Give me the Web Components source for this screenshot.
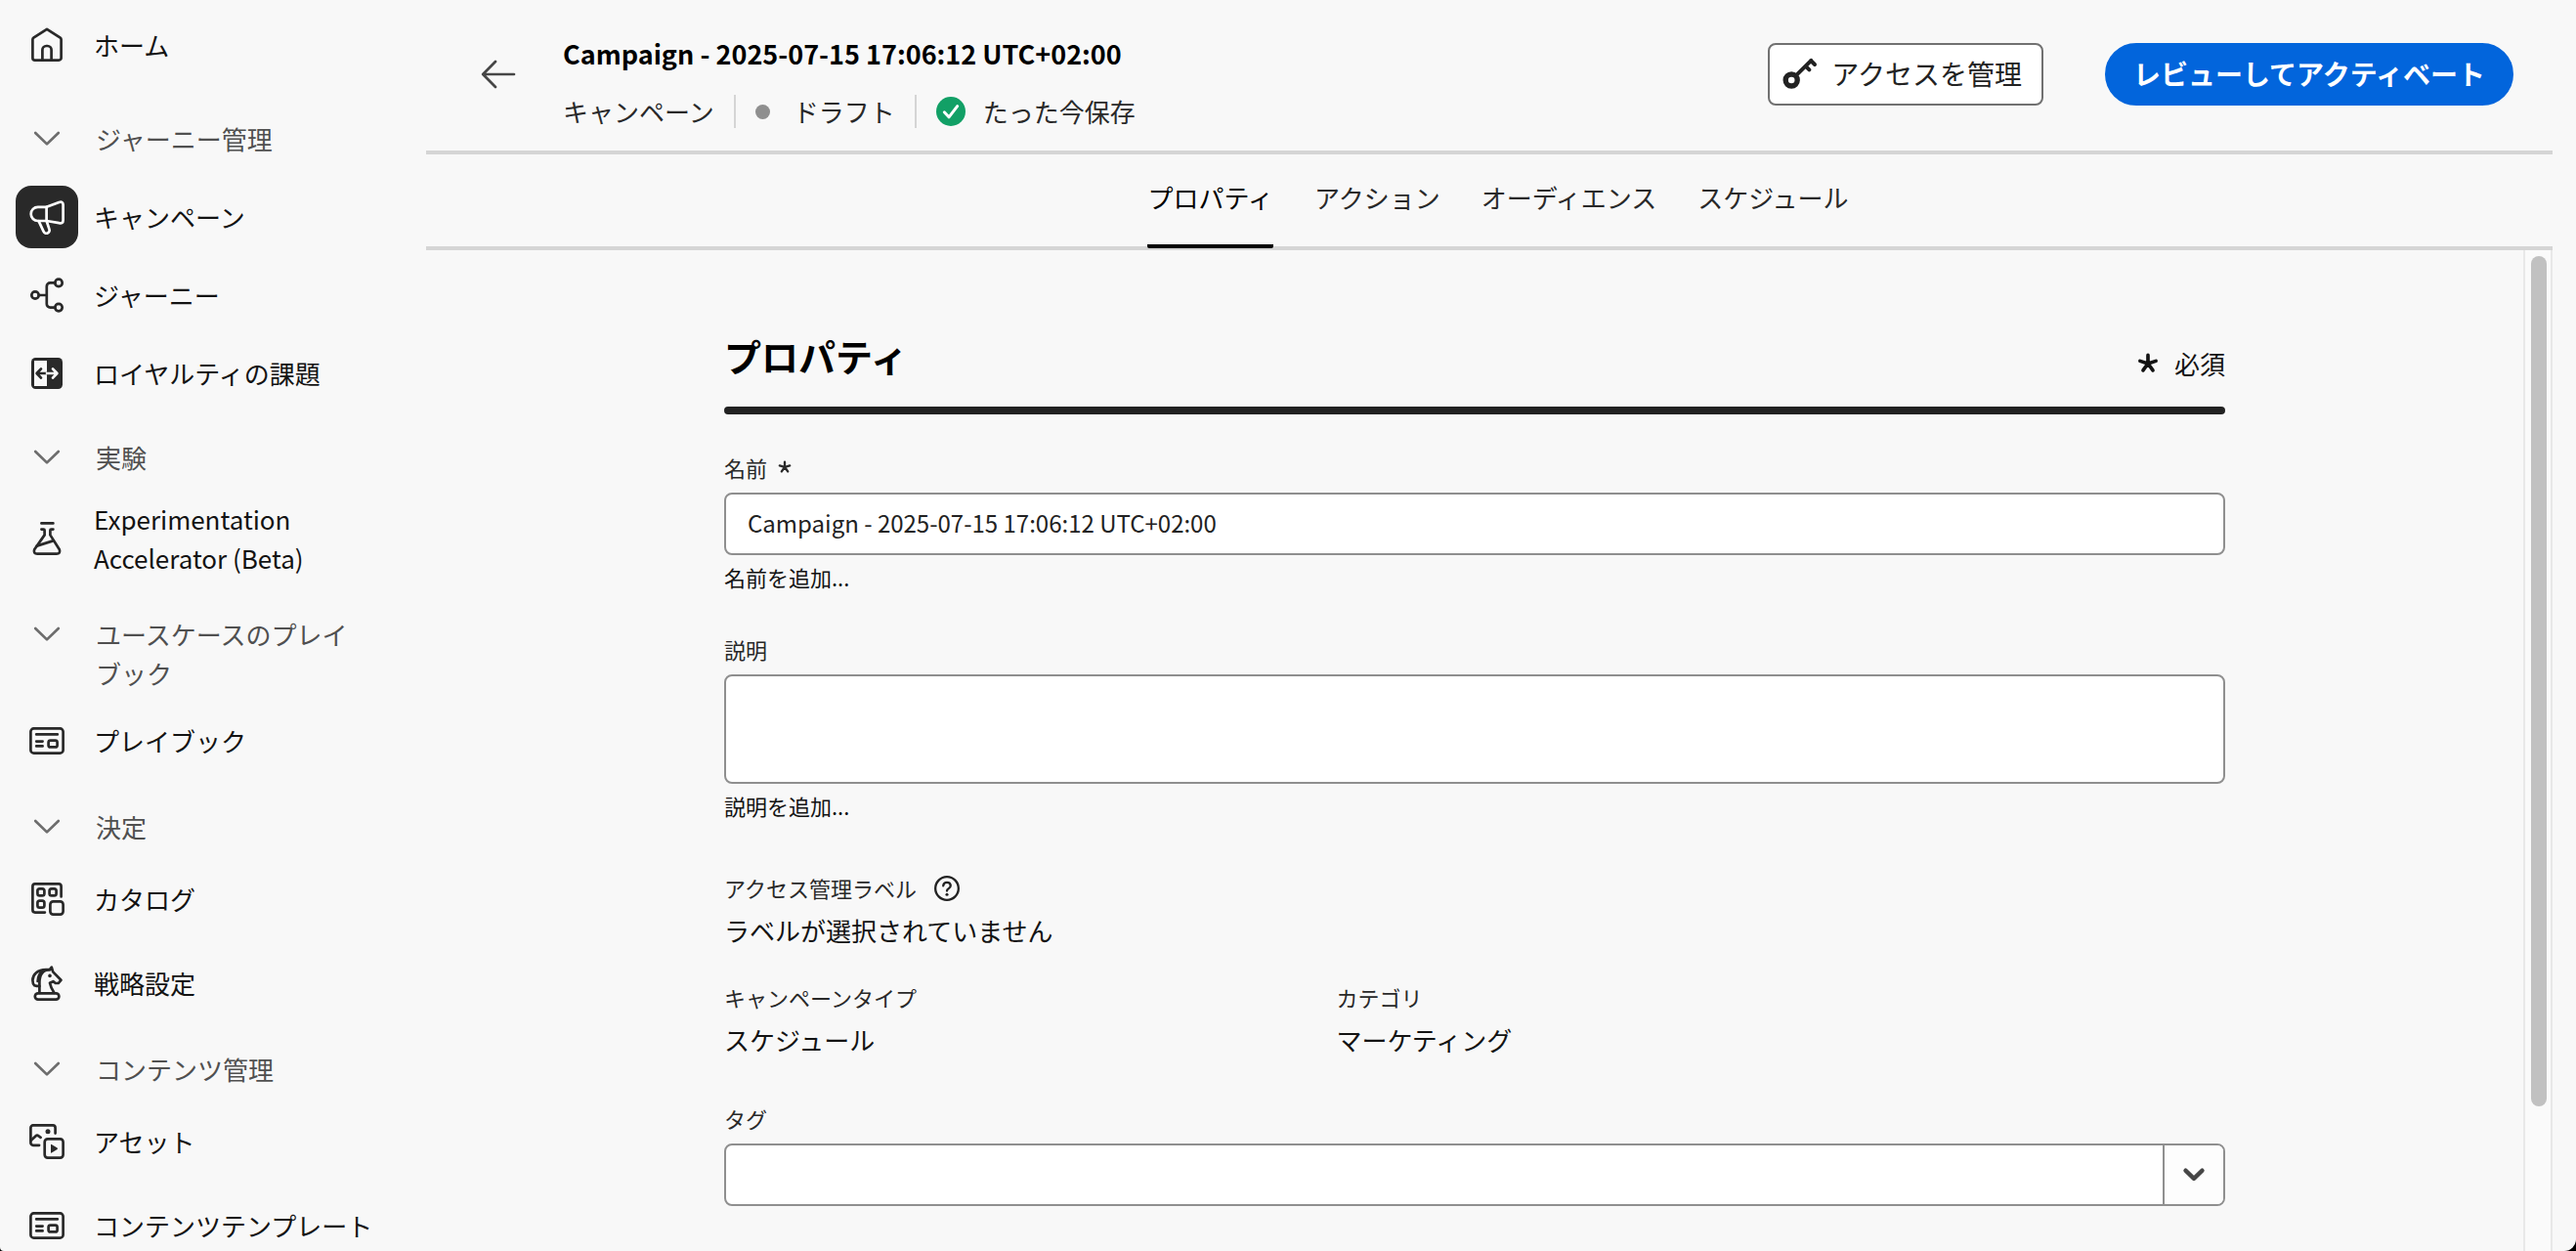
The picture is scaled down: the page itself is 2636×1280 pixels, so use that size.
<!DOCTYPE html>
<html lang="ja">
<head>
  <meta charset="UTF-8">
  <meta name="viewport" content="width=device-width, initial-scale=1.0">
  <title>Campaign</title>
  <style>
    html {
      background: #000;
    }

    body {
      margin: 0;
      font-family: "Noto Sans CJK JP", sans-serif;
      font-size: 26px;
      line-height: 40px;
      color: #131313;
    }
  </style>
</head>
<body>
  <uc-app>
    <uc-nav slot="nav">
      <uc-nav-item icon="home">ホーム</uc-nav-item>
      <uc-nav-heading space="lg">ジャーニー管理</uc-nav-heading>
      <uc-nav-item icon="campaign" space="xs" selected>キャンペーン</uc-nav-item>
      <uc-nav-item icon="journey" space="xs">ジャーニー</uc-nav-item>
      <uc-nav-item icon="loyalty" space="xs">ロイヤルティの課題</uc-nav-item>
      <uc-nav-heading space="sm">実験</uc-nav-heading>
      <uc-nav-item icon="flask" space="xs">Experimentation<br>Accelerator (Beta)</uc-nav-item>
      <uc-nav-heading space="xl">ユースケースのプレイブック</uc-nav-heading>
      <uc-nav-item icon="template" space="sm">プレイブック</uc-nav-item>
      <uc-nav-heading space="md">決定</uc-nav-heading>
      <uc-nav-item icon="catalog">カタログ</uc-nav-item>
      <uc-nav-item icon="strategy" space="sm">戦略設定</uc-nav-item>
      <uc-nav-heading space="md">コンテンツ管理</uc-nav-heading>
      <uc-nav-item icon="assets">アセット</uc-nav-item>
      <uc-nav-item icon="template" space="sm">コンテンツテンプレート</uc-nav-item>
    </uc-nav>

    <uc-header slot="header">
      <span slot="title">Campaign - 2025-07-15 17:06:12 UTC+02:00</span>
      <span slot="type">キャンペーン</span>
      <span slot="status">ドラフト</span>
      <span slot="saved">たった今保存</span>
      <uc-button slot="actions" icon="key">アクセスを管理</uc-button>
      <uc-button slot="actions" variant="accent">レビューしてアクティベート</uc-button>
    </uc-header>

    <uc-tabs slot="tabs">
      <uc-tab selected>プロパティ</uc-tab>
      <uc-tab>アクション</uc-tab>
      <uc-tab>オーディエンス</uc-tab>
      <uc-tab>スケジュール</uc-tab>
    </uc-tabs>

    <uc-panel>
      <span slot="title">プロパティ</span>
      <span slot="note">必須</span>
      <uc-field label="名前" type="text" value="Campaign - 2025-07-15 17:06:12 UTC+02:00" help="名前を追加..." required></uc-field>
      <uc-field label="説明" type="area" help="説明を追加..."></uc-field>
      <uc-summary>
        <uc-value label="アクセス管理ラベル" hint>ラベルが選択されていません</uc-value>
        <uc-value label="キャンペーンタイプ">スケジュール</uc-value>
        <uc-value label="カテゴリ">マーケティング</uc-value>
      </uc-summary>
      <uc-field label="タグ" type="select"></uc-field>
    </uc-panel>
  </uc-app>

  <script>
    const ICONS = {
      home: `
        <path d="M18 1.8 4.3 10.7q-.9.6-.9 1.7v18.8a2.4 2.4 0 0 0 2.4 2.4h24.4a2.4 2.4 0 0 0 2.4-2.4V12.4q0-1.1-.9-1.7z"/>
        <path d="M13.4 33.6V23a4 4 0 0 1 4-4h1.2a4 4 0 0 1 4 4v10.6"/>`,
      chevron: `<path d="M6.2 12 18 23.4 29.8 12"/>`,
      campaign: `
        <path d="M17.6 7.8H8.8a7.1 7.1 0 0 0 0 14.2h8.8z"/>
        <path d="M17.6 7.8 30.4 3q4.2-1.2 4.2 2.6v15.6q0 4-4.2 3L17.6 22"/>
        <path d="m9.6 22.2 5 10.6a3.1 3.1 0 0 0 5.8-2.4L17.6 22"/>`,
      journey: `
        <circle cx="6" cy="18" r="3.7"/>
        <circle cx="30" cy="5.4" r="3.7"/>
        <circle cx="30" cy="30.6" r="3.7"/>
        <path d="M9.7 18h8.1M26.3 5.4h-4.9a3.6 3.6 0 0 0-3.6 3.6v18a3.6 3.6 0 0 0 3.6 3.6h4.9"/>`,
      loyalty: `
        <rect x="2" y="2" width="32" height="32" rx="4.5" fill="currentColor" stroke="none"/>
        <path d="M5 5h13v26H5z" fill="#f8f8f8" stroke="none"/>
        <path d="M18 18H8M12 13.4 7.6 18l4.4 4.6"/>
        <path d="M18 18h10M24 13.4l4.4 4.6-4.4 4.6" stroke="#f8f8f8"/>`,
      flask: `
        <path d="M12.4 2.4h12M12.4 8.6h2.2q1 0 1 1v4.8L5.2 29.2q-1.4 4.4 3 4.4h19.6q4.4 0 3-4.4L21.4 14.4V9.6q0-1 1-1h2"/>
        <path d="m7.6 25.6 16.6-5.2"/>`,
      template: `
        <rect x="1.4" y="5.4" width="33.2" height="25.2" rx="3.2"/>
        <path d="M7.2 11.4h21.6M7.2 18.6h6.4M7.2 23.4h6.4"/>
        <rect x="19.6" y="17.6" width="9" height="6.8" rx="2"/>`,
      catalog: `
        <path d="M32.6 15.4V4.9a2.5 2.5 0 0 0-2.5-2.5H5.9a2.5 2.5 0 0 0-2.5 2.5v24.2a2.5 2.5 0 0 0 2.5 2.5h10"/>
        <rect x="8.4" y="7.4" width="7" height="7" rx="2.2"/>
        <rect x="20.6" y="7.4" width="7" height="7" rx="2.2"/>
        <rect x="8.4" y="19.6" width="7" height="7" rx="2.2"/>
        <rect x="21.4" y="20.4" width="13.2" height="13.2" rx="3"/>`,
      strategy: `
        <rect x="5.8" y="28.4" width="24.6" height="6.2" rx="3.1"/>
        <path d="M10.4 28V17.6C10.4 9 14.6 4.4 20.8 4.2l2-2.6 1.4 4.8 8.2 8.4-2.6 3.2h-3l-2.4-1.8-3.4 1.6q1 5 4.4 10"/>
        <path d="M20.8 4.2H17C8 4.2 3.4 9.4 3.4 15q0 3.6 1.8 5.2 2 .8 5.2.8M14.6 4.6Q9 8.4 8.6 16"/>
        <circle cx="21" cy="10.4" r="1.8" fill="currentColor" stroke="none"/>`,
      assets: `
        <path d="M26.6 9.6V3.9a2.5 2.5 0 0 0-2.5-2.5H3.9a2.5 2.5 0 0 0-2.5 2.5v15.4a2.5 2.5 0 0 0 2.5 2.5h6.2"/>
        <path d="m1.8 16.8 4.6-4.4q1.6-1.4 3.2 0l2 1.4"/>
        <circle cx="19" cy="7.7" r="2.5" fill="currentColor" stroke="none"/>
        <rect x="15.7" y="15.4" width="18.9" height="19.2" rx="3"/>
        <path d="M22 21.4v7.8q0 .8.8.4l5.8-3.6q.8-.7 0-1.4L22.800 21q-.8-.4-.8.4z" fill="currentColor" stroke="none"/>`,
      back: `<path d="M34 18H2.5M15 5 2.200 18 15 31"/>`,
      key: `
        <circle cx="9.200" cy="25" r="6" stroke-width="5.400"/>
        <path d="M14 20.200 29.400 4.800M23.600 10.600l3.800 3.800M29 5l4 4" stroke-width="4"/>`,
      check: `
        <circle cx="18" cy="18" r="18" fill="#12a066" stroke="none"/>
        <path d="m10 19 5.6 6L26 11.6" stroke="#fff" stroke-width="3.6"/>`,
      help: `
        <circle cx="18" cy="18" r="16.4"/>
        <path d="M12.8 14.2q.4-4.8 5.2-4.8t5.2 4.4q0 2.6-2.8 4.4-2.4 1.6-2.4 3.4"/>
        <circle cx="18" cy="26.6" r="2.1" fill="currentColor" stroke="none"/>`,
      asterisk: `<path d="M18 18V4M18 18 4.7 13.7M18 18l13.3-4.3M18 18 9.8 29.3M18 18l8.2 11.3" stroke-width="6"/>`
    };

    class Icon extends HTMLElement {
      constructor() {
        super();
        this.attachShadow({ mode: 'open' });
      }

      connectedCallback() {
        this.shadowRoot.innerHTML = `
          <style>
            :host {
              display: inline-flex;
              flex: none;
              width: 36px;
              height: 36px;
            }

            svg {
              width: 100%;
              height: 100%;
              fill: none;
              stroke: currentColor;
              stroke-width: var(--stroke, 2.7);
              stroke-linecap: round;
              stroke-linejoin: round;
            }
          </style>
          <svg viewBox="0 0 36 36" aria-hidden="true">${ICONS[this.getAttribute('name')]}</svg>
        `;
      }
    }

    class App extends HTMLElement {
      constructor() {
        super();
        this.attachShadow({ mode: 'open' });
        this.shadowRoot.innerHTML = `
          <style>
            :host {
              display: flex;
              height: 100vh;
              overflow: hidden;
              background: #f8f8f8;
              border-radius: 0 0 12px 4px;
            }

            main {
              flex: 1;
              min-width: 0;
              margin-right: 24px;
              display: flex;
              flex-direction: column;
            }
          </style>
          <slot name="nav"></slot>
          <main>
            <slot name="header"></slot>
            <slot name="tabs"></slot>
            <slot></slot>
          </main>
        `;
      }
    }

    class Nav extends HTMLElement {
      constructor() {
        super();
        this.attachShadow({ mode: 'open' });
        this.shadowRoot.innerHTML = `
          <style>
            :host {
              display: block;
              flex: none;
              width: 436px;
            }

            nav {
              display: flex;
              flex-direction: column;
              padding-top: 9px;
            }

            ::slotted([space="xs"]) { margin-top: 6px; }
            ::slotted([space="sm"]) { margin-top: 12px; }
            ::slotted([space="md"]) { margin-top: 14px; }
            ::slotted([space="lg"]) { margin-top: 22px; }
            ::slotted([space="xl"]) { margin-top: 38px; }
          </style>
          <nav><slot></slot></nav>
        `;
      }
    }

    class NavItem extends HTMLElement {
      constructor() {
        super();
        this.attachShadow({ mode: 'open' });
      }

      connectedCallback() {
        this.shadowRoot.innerHTML = `
          <style>
            :host {
              display: block;
            }

            a {
              display: flex;
              align-items: center;
              gap: 16px;
              min-height: 74px;
              padding-left: 16px;
              color: inherit;
              text-decoration: none;
              white-space: nowrap;
            }

            .icon {
              display: flex;
              align-items: center;
              justify-content: center;
              width: 64px;
              height: 64px;
              border-radius: 16px;
              color: #292929;
            }

            :host([selected]) .icon {
              background: #292929;
              color: #fff;
            }
          </style>
          <a href="#">
            <span class="icon"><uc-icon name="${this.getAttribute('icon')}"></uc-icon></span>
            <span><slot></slot></span>
          </a>
        `;
      }
    }

    class NavHeading extends HTMLElement {
      constructor() {
        super();
        this.attachShadow({ mode: 'open' });
        this.shadowRoot.innerHTML = `
          <style>
            :host {
              display: block;
            }

            button {
              display: flex;
              align-items: center;
              width: 100%;
              min-height: 74px;
              padding: 0 60px 0 30px;
              border: 0;
              background: none;
              font: inherit;
              text-align: left;
              color: #505050;
            }

            .row {
              display: flex;
              gap: 32px;
            }

            uc-icon {
              height: 40px;
              color: #6d6d6d;
            }
          </style>
          <button type="button" aria-expanded="true">
            <span class="row">
              <uc-icon name="chevron"></uc-icon>
              <span><slot></slot></span>
            </span>
          </button>
        `;
      }
    }

    class Header extends HTMLElement {
      constructor() {
        super();
        this.attachShadow({ mode: 'open' });
        this.shadowRoot.innerHTML = `
          <style>
            :host {
              display: block;
              border-bottom: 4px solid #d5d5d5;
            }

            header {
              display: flex;
              align-items: flex-start;
              padding: 36px 40px 20px 56px;
            }

            .back {
              display: flex;
              align-items: center;
              height: 80px;
              padding: 0;
              border: 0;
              background: none;
              color: #464646;
            }

            .text {
              flex: 1;
              padding-left: 48px;
            }

            h1 {
              margin: 0;
              font-size: 27px;
              line-height: 38px;
              color: #000;
            }

            .meta {
              display: flex;
              align-items: center;
              gap: 20px;
              padding-top: 20px;
              color: #292929;
            }

            .meta > span {
              display: flex;
              align-items: center;
              gap: 18px;
            }

            .meta > span + span {
              padding-left: 22px;
              background: linear-gradient(#d5d5d5, #d5d5d5) left / 2px 34px no-repeat;
            }

            .dot {
              width: 15px;
              height: 15px;
              margin-right: 6px;
              border-radius: 50%;
              background: #8f8f8f;
            }

            .meta uc-icon {
              width: 30px;
              height: 30px;
            }

            .actions {
              display: flex;
              gap: 63px;
              padding-top: 8px;
            }
          </style>
          <header>
            <button class="back" type="button" aria-label="戻る"><uc-icon name="back"></uc-icon></button>
            <div class="text">
              <h1><slot name="title"></slot></h1>
              <div class="meta">
                <span><slot name="type"></slot></span>
                <span><i class="dot"></i><slot name="status"></slot></span>
                <span><uc-icon name="check"></uc-icon><slot name="saved"></slot></span>
              </div>
            </div>
            <div class="actions"><slot name="actions"></slot></div>
          </header>
        `;
      }
    }

    class Button extends HTMLElement {
      constructor() {
        super();
        this.attachShadow({ mode: 'open' });
      }

      connectedCallback() {
        const icon = this.getAttribute('icon');
        this.shadowRoot.innerHTML = `
          <style>
            :host {
              display: block;
            }

            button {
              display: flex;
              align-items: center;
              gap: 14px;
              box-sizing: border-box;
              height: 64px;
              padding: 0 20px 3px 13px;
              border: 2px solid #717171;
              border-radius: 8px;
              background: #fff;
              font: inherit;
              font-size: 28px;
              color: #222;
              white-space: nowrap;
            }

            :host([variant="accent"]) button {
              padding: 0 27px 3px;
              border-color: #0265dc;
              border-radius: 32px;
              background: #0265dc;
              font-weight: bold;
              color: #fff;
            }
          </style>
          <button type="button">${icon ? `<uc-icon name="${icon}"></uc-icon>` : ''}<slot></slot></button>
        `;
      }
    }

    class Tabs extends HTMLElement {
      constructor() {
        super();
        this.attachShadow({ mode: 'open' });
        this.shadowRoot.innerHTML = `
          <style>
            :host {
              display: flex;
              justify-content: center;
              gap: 42px;
              height: 94px;
              padding-left: 18px;
              border-bottom: 4px solid #d5d5d5;
            }
          </style>
          <slot></slot>
        `;
        this.setAttribute('role', 'tablist');
      }
    }

    class Tab extends HTMLElement {
      constructor() {
        super();
        this.attachShadow({ mode: 'open' });
      }

      connectedCallback() {
        this.shadowRoot.innerHTML = `
          <style>
            :host {
              display: block;
            }

            button {
              display: block;
              box-sizing: border-box;
              height: 96px;
              padding: 24px 0 28px;
              border: 0;
              border-bottom: 4px solid transparent;
              background: none;
              font: inherit;
              color: #292929;
            }

            :host([selected]) button {
              border-color: #000;
              border-radius: 2px;
              color: #000;
            }
          </style>
          <button type="button" role="tab" aria-selected="${this.hasAttribute('selected')}"><slot></slot></button>
        `;
      }
    }

    class Panel extends HTMLElement {
      constructor() {
        super();
        this.attachShadow({ mode: 'open' });
        this.shadowRoot.innerHTML = `
          <style>
            :host {
              display: flex;
              flex: 1;
              min-height: 0;
            }

            .scroll {
              flex: 1;
              overflow: hidden;
            }

            .content {
              display: flex;
              flex-direction: column;
              gap: 46px;
              max-width: 1536px;
              margin: 0 auto;
              padding: 80px 24px;
            }

            .head {
              display: flex;
              justify-content: space-between;
              align-items: flex-end;
              padding-bottom: 24px;
            }

            h2 {
              margin: 0;
              font-size: 38px;
              line-height: 56px;
              color: #000;
            }

            .note {
              display: flex;
              align-items: center;
              gap: 16px;
            }

            .note uc-icon {
              width: 22px;
              height: 22px;
            }

            hr {
              height: 8px;
              margin: 0 0 -6px;
              border: 0;
              border-radius: 4px;
              background: #222;
            }

            .track {
              box-sizing: border-box;
              width: 30px;
              padding: 6px 4px 6px 6px;
              border: solid #e8e8e8;
              border-width: 0 2px;
              background: #fafafa;
            }

            .thumb {
              height: 86%;
              border-radius: 8px;
              background: #c1c1c1;
            }
          </style>
          <div class="scroll">
            <div class="content">
              <div>
                <div class="head">
                  <h2><slot name="title"></slot></h2>
                  <span class="note"><uc-icon name="asterisk"></uc-icon><slot name="note"></slot></span>
                </div>
                <hr>
              </div>
              <slot></slot>
            </div>
          </div>
          <div class="track"><div class="thumb"></div></div>
        `;
      }
    }

    class Field extends HTMLElement {
      constructor() {
        super();
        this.attachShadow({ mode: 'open' });
      }

      connectedCallback() {
        const help = this.getAttribute('help');
        this.shadowRoot.innerHTML = `
          <style>
            :host {
              display: flex;
              flex-direction: column;
              gap: 8px;
              font-size: 22px;
              line-height: 28px;
            }

            label {
              display: flex;
              align-items: center;
              gap: 11px;
              padding-bottom: 4px;
              color: #292929;
            }

            label uc-icon {
              width: 14px;
              height: 14px;
            }

            input,
            textarea,
            select {
              display: block;
              box-sizing: border-box;
              width: 100%;
              height: 64px;
              margin: 0;
              padding: 0 22px 3px;
              border: 2px solid #8f8f8f;
              border-radius: 8px;
              background: #fff;
              font: inherit;
              font-size: 24px;
              color: #222;
              appearance: none;
              resize: none;
            }

            textarea {
              height: 112px;
            }

            /* the arrow cell sits in the same grid area as the select */
            .select {
              display: grid;
            }

            .select > * {
              grid-area: 1 / 1;
            }

            .arrow {
              justify-self: end;
              display: flex;
              align-items: center;
              justify-content: center;
              width: 60px;
              margin: 2px;
              border-left: 2px solid #8f8f8f;
              border-radius: 0 6px 6px 0;
              background: #fdfdfd;
              color: #464646;
              pointer-events: none;
            }

            .arrow uc-icon {
              width: 26px;
              height: 26px;
              --stroke: 6;
            }
          </style>
          <label for="control">${this.getAttribute('label')}${this.hasAttribute('required') ? '<uc-icon name="asterisk"></uc-icon>' : ''}</label>
          ${this.control()}
          ${help ? `<span>${help}</span>` : ''}
        `;
      }

      control() {
        switch (this.getAttribute('type')) {
          case 'area':
            return '<textarea id="control"></textarea>';
          case 'select':
            return `
              <div class="select">
                <select id="control"></select>
                <span class="arrow"><uc-icon name="chevron"></uc-icon></span>
              </div>`;
          default:
            return `<input id="control" type="text" value="${this.getAttribute('value')}" required>`;
        }
      }
    }

    class Summary extends HTMLElement {
      constructor() {
        super();
        this.attachShadow({ mode: 'open' });
        this.shadowRoot.innerHTML = `
          <style>
            :host {
              display: grid;
              grid-template-columns: 2fr 3fr;
              gap: 34px 20px;
              padding-top: 10px;
            }

            ::slotted([hint]) {
              grid-column: 1 / -1;
            }
          </style>
          <slot></slot>
        `;
      }
    }

    class Value extends HTMLElement {
      constructor() {
        super();
        this.attachShadow({ mode: 'open' });
      }

      connectedCallback() {
        this.shadowRoot.innerHTML = `
          <style>
            :host {
              display: flex;
              flex-direction: column;
              gap: 10px;
            }

            .label {
              display: flex;
              align-items: center;
              gap: 18px;
              font-size: 22px;
              line-height: 28px;
              color: #292929;
            }

            button {
              display: flex;
              padding: 2px 0 0;
              border: 0;
              background: none;
              color: #222;
            }

            uc-icon {
              width: 26px;
              height: 26px;
              --stroke: 3.2;
            }
          </style>
          <div class="label">
            <span>${this.getAttribute('label')}</span>
            ${this.hasAttribute('hint') ? '<button type="button" aria-label="ヘルプ"><uc-icon name="help"></uc-icon></button>' : ''}
          </div>
          <div><slot></slot></div>
        `;
      }
    }

    customElements.define('uc-icon', Icon);
    customElements.define('uc-app', App);
    customElements.define('uc-nav', Nav);
    customElements.define('uc-nav-item', NavItem);
    customElements.define('uc-nav-heading', NavHeading);
    customElements.define('uc-header', Header);
    customElements.define('uc-button', Button);
    customElements.define('uc-tabs', Tabs);
    customElements.define('uc-tab', Tab);
    customElements.define('uc-panel', Panel);
    customElements.define('uc-field', Field);
    customElements.define('uc-summary', Summary);
    customElements.define('uc-value', Value);
  </script>
</body>
</html>
